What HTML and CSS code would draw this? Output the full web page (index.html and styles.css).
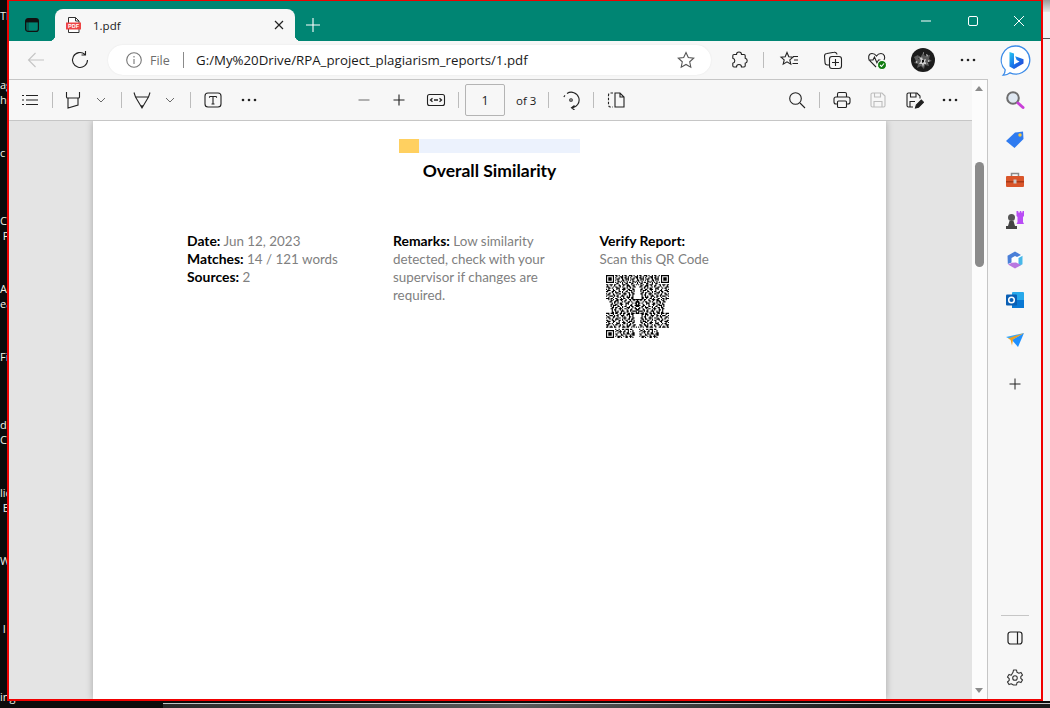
FILE: index.html
```html
<!DOCTYPE html>
<html lang="en">

<head>
  <meta charset="UTF-8">
  <title>1.pdf</title>
  <link rel="stylesheet" href="styles.css">
</head>

<body>
  <!-- Desktop behind the window, only slivers are visible -->
  <div class="desk-left">
    <div class="desk-top">Th</div>
    <div class="desk-item">ag<br>he</div>
    <div class="desk-item">c</div>
    <div class="desk-item">Co<br>&nbsp;P</div>
    <div class="desk-item">A<br>ea</div>
    <div class="desk-item">Fi</div>
    <div class="desk-item">d<br>C</div>
    <div class="desk-item">lic<br>&nbsp;E</div>
    <div class="desk-item">W</div>
    <div class="desk-item">&nbsp;I</div>
    <div class="desk-item">ing</div>
  </div>
  <div class="desk-right"><div class="desk-right-top"></div><div class="desk-right-line"></div></div>
  <div class="desk-bottom"></div>

  <div class="window">
    <!-- Title bar -->
    <div class="titlebar">
      <svg class="tab-toggle" viewBox="0 0 14 14"><rect x=".6" y=".6" width="12.8" height="12.8" rx="2.5" fill="none" stroke="#111" stroke-width="1.2"/><rect x="1" y="1" width="12" height="3.4" fill="#111"/><rect x="1" y="1" width="3" height="12" fill="#111" opacity=".25"/></svg>
      <div class="tab">
        <svg class="favicon" viewBox="0 0 15 16"><path d="M2.5.5h7l3.5 3.5v11.500h-10.500z" fill="#fff" stroke="#333"/><path d="M9.500.5v3.500h3.500" fill="none" stroke="#333"/><rect x="0" y="5.500" width="15" height="7" fill="#ee4444"/><text x="7.500" y="11" class="favicon-text">PDF</text></svg>
        <span class="tab-title">1.pdf</span>
        <svg class="tab-close" viewBox="0 0 10 10"><path d="M1 1l8 8M9 1l-8 8"/></svg>
      </div>
      <svg class="new-tab" viewBox="0 0 14 14"><path d="M7 0v14M0 7h14"/></svg>
      <div class="win-controls">
        <div class="win-btn"><svg viewBox="0 0 10 10"><path d="M0 5h10"/></svg></div>
        <div class="win-btn win-max"><svg viewBox="0 0 10 10"><rect x=".5" y=".5" width="9" height="9" rx="1.500"/></svg></div>
        <div class="win-btn win-close"><svg viewBox="0 0 10 10"><path d="M0 0l10 10M10 0l-10 10"/></svg></div>
      </div>
    </div>

    <!-- Address bar -->
    <div class="navbar">
      <svg class="ic back" viewBox="0 0 20 20"><path d="M18 10H2.500M9.500 3l-7 7 7 7"/></svg>
      <svg class="ic ml-24" viewBox="0 0 20 20"><path d="M17.500 10a7.500 7.500 0 1 1-2.500-5.600M15.500 1v4h-4"/></svg>
      <div class="address">
        <svg class="ic-info" viewBox="0 0 16 16"><circle cx="8" cy="8" r="7.300"/><path d="M8 7v5M8 4v1.500"/></svg>
        <span class="file-label">File</span>
        <span class="addr-sep"></span>
        <span class="url">G:/My%20Drive/RPA_project_plagiarism_reports/1.pdf</span>
        <svg class="ic star" viewBox="0 0 20 20"><path d="M10 2.500l2.300 5 5.400.6-4 3.700 1.100 5.400-4.800-2.700-4.800 2.700 1.100-5.400-4-3.700 5.400-.6z"/></svg>
      </div>
      <svg class="ic ml-18" viewBox="0 0 20 20"><path d="M7.500 4.500a2.500 2.500 0 0 1 5 0h2.500a1.200 1.200 0 0 1 1.200 1.200v2.600a2.500 2.500 0 0 1 0 4.900v2.600a1.200 1.200 0 0 1-1.200 1.200h-2.500a2.500 2.500 0 0 0-5 0H5a1.200 1.200 0 0 1-1.200-1.200v-2.600a2.500 2.500 0 0 0 0-4.900V5.700A1.200 1.200 0 0 1 5 4.500z"/></svg>
      <span class="sep ml-14"></span>
      <svg class="ic ml-15" viewBox="0 0 20 20"><path d="M8 2.500l1.800 4.200 4.200.4-3.200 2.800 1 4.300-3.800-2.300-3.800 2.300 1-4.300-3.200-2.800 4.200-.4zM14 6.500h5M15 10h4M13.500 13.500h5.500"/></svg>
      <svg class="ic ml-24" viewBox="0 0 20 20"><path d="M6 15H4.500A2.500 2.500 0 0 1 2 12.500L1.500 6A2.500 2.500 0 0 1 4 3.500l7-1.200a2.500 2.500 0 0 1 3 2.200"/><rect x="6.500" y="6.500" width="12" height="12" rx="2.500"/><path d="M12.500 9v7M9 12.500h7"/></svg>
      <svg class="ic ml-24" viewBox="0 0 20 20"><path d="M9 17L3 11C.5 8 1.500 3.500 5 3.500c2 0 3.500 1 4.500 2.500 1-1.500 2.500-2.500 4.500-2.500 3.500 0 4.500 4 3 6.500M1.500 10H6l1.500-3 2.500 6 1.500-3h2"/><circle cx="15" cy="15" r="4.500" fill="#107c10" stroke="#fff"/><path d="M13 15l1.500 1.500 2.500-3" stroke="#fff"/></svg>
      <div class="avatar"><svg viewBox="0 0 24 24"><path d="M3 9l4-2 2 3 3-5 2 3 5-1-1 4 3 2-4 1 1 4-4-1-1 4-3-3-4 2 1-4-4-1 2-2z" fill="#5c5c5c"/><path d="M8 8l2 2 1-1 1 3 3-1-1 3 3 2-4 0-1 3-1-3-3 0 2-3zM15 6l2 1-1 2zM5 13l2 1-2 1zM12 4l1 1-1 1zM17 12l2 1-2 1z" fill="#cfcfcf"/><path d="M11 12l2 0 0 2-2 1zM7 10l1 0 0 1zM15 15l1 1-1 0z" fill="#111"/></svg></div>
      <svg class="ic ml-23" viewBox="0 0 20 20"><circle cx="4" cy="10" r="1.300" class="dot"/><circle cx="10" cy="10" r="1.300" class="dot"/><circle cx="16" cy="10" r="1.300" class="dot"/></svg>
      <svg class="bing" viewBox="0 0 31 31"><defs><linearGradient id="bingfill" x1="0" y1="0" x2="1" y2="1"><stop offset="0" stop-color="#27c8f0"/><stop offset=".55" stop-color="#1a6fe8"/><stop offset="1" stop-color="#2a3fd0"/></linearGradient></defs><path d="M15.700 1a14 14 0 1 1-5.600 26.800c-2 1.600-4.500 2.500-7 2.300 1.500-1.500 2.200-3.500 2-5.500A14 14 0 0 1 15.700 1z" fill="#fff" stroke="#3b8be8" stroke-width="1.300"/><path d="M9.500 7l4.500 1.600v11l5.500-3.200-2.800-1.300-1.600-3.800 8.400 3v4.200l-9.500 5.500-4.500-2.500z" fill="url(#bingfill)"/></svg>
    </div>

    <div class="content">
      <div class="main">
        <div class="viewer">
          <!-- PDF toolbar -->
          <div class="pdfbar">
            <svg class="ic" viewBox="0 0 20 20"><path d="M6 5.500h12M6 10h12M6 14.500h12M2 5.500h2M2 10h2M2 14.500h2"/></svg>
            <span class="sep ml-12"></span>
            <svg class="ic ml-10" viewBox="0 0 20 20"><path d="M3.500 2v5a1 1 0 0 0 1 1h11a1 1 0 0 0 1-1V2M5 8v10l10-3V8"/></svg>
            <svg class="chev ml-13" viewBox="0 0 10 6"><path d="M1 1l4 4 4-4"/></svg>
            <span class="sep ml-15"></span>
            <svg class="ic ml-10" viewBox="0 0 20 20"><path d="M2 2.500l1.500 4.500h13L18 2.500M3.500 7L10 18l6.500-11M10 15v3"/></svg>
            <svg class="chev ml-13" viewBox="0 0 10 6"><path d="M1 1l4 4 4-4"/></svg>
            <span class="sep ml-15"></span>
            <svg class="ic ml-12" viewBox="0 0 20 20"><rect x="2" y="3" width="16" height="14" rx="3"/><path d="M6.500 6.500h7M10 6.500v7.500M8.500 14h3M6.500 6.500v1.200M13.500 6.500v1.200"/></svg>
            <svg class="ic ml-16" viewBox="0 0 20 20"><circle cx="4" cy="10" r="1.300" class="dot"/><circle cx="10" cy="10" r="1.300" class="dot"/><circle cx="16" cy="10" r="1.300" class="dot"/></svg>

            <svg class="ic grey ml-95" viewBox="0 0 20 20"><path d="M4.500 10h11"/></svg>
            <svg class="ic ml-15" viewBox="0 0 20 20"><path d="M4.500 10h11M10 4.500v11"/></svg>
            <svg class="ic ml-17" viewBox="0 0 20 20"><rect x="1.500" y="4.500" width="17" height="11" rx="2"/><path d="M8 10h4M6.500 8.200L4.500 10l2 1.800M13.500 8.200l2 1.800-2 1.800" stroke-width="1.300"/></svg>
            <span class="sep ml-12"></span>
            <div class="page-input ml-6">1</div>
            <span class="page-of ml-11">of 3</span>
            <span class="sep ml-12"></span>
            <svg class="ic ml-12" viewBox="0 0 20 20"><path d="M6 3.500a7.800 7.800 0 1 1 4.500 14.300M13.500 15.500l-3 2.300 3 2.200M2.800 7l1.200-1.600"/><circle cx="10" cy="10" r="1.300"/></svg>
            <span class="sep ml-12"></span>
            <svg class="ic ml-12" viewBox="0 0 20 20"><path d="M7 3H4.500A2 2 0 0 0 2.500 5v10a2 2 0 0 0 2 2H7" stroke-dasharray="2.500 1.500"/><path d="M9 3h5l4 4v10H9zM14 3v4h4"/></svg>

            <svg class="ic ml-161" viewBox="0 0 20 20"><circle cx="8.500" cy="8.500" r="5.800"/><path d="M13 13l5 5"/></svg>
            <span class="sep ml-12"></span>
            <svg class="ic ml-12" viewBox="0 0 20 20"><path d="M5.500 7V4a1.500 1.500 0 0 1 1.500-1.500h6A1.500 1.500 0 0 1 14.500 4v3M5.500 14H4a2 2 0 0 1-2-2V9a2 2 0 0 1 2-2h12a2 2 0 0 1 2 2v3a2 2 0 0 1-2 2h-1.500"/><rect x="5.500" y="11" width="9" height="6.500" rx="1"/></svg>
            <svg class="ic disabled ml-16" viewBox="0 0 20 20"><path d="M3 4.500A1.500 1.500 0 0 1 4.500 3H14l3 3v9.500a1.500 1.500 0 0 1-1.500 1.500h-11A1.500 1.500 0 0 1 3 15.500z"/><path d="M6.500 3v4h6V3M6 17v-5.500h8V17"/></svg>
            <svg class="ic ml-16" viewBox="0 0 20 20"><path d="M9 17H4.500A1.500 1.500 0 0 1 3 15.500v-11A1.500 1.500 0 0 1 4.500 3H13l3 3v2.500"/><path d="M6.500 3v4h5.500V3M6 17v-5.500h5"/><path d="M11.500 18l.8-3 5-5 2.200 2.200-5 5z" fill="#222"/></svg>
            <svg class="ic ml-16" viewBox="0 0 20 20"><circle cx="4" cy="10" r="1.300" class="dot"/><circle cx="10" cy="10" r="1.300" class="dot"/><circle cx="16" cy="10" r="1.300" class="dot"/></svg>
          </div>

          <div class="pages">
            <div class="page">
              <div class="score-bar"><span class="score-fill"></span><span class="score-rest"></span></div>
              <h1 class="report-title">Overall Similarity</h1>
              <div class="report-info">
                <div>
                  <b>Date:</b> Jun 12, 2023<br>
                  <b>Matches:</b> 14 / 121 words<br>
                  <b>Sources:</b> 2
                </div>
                <div>
                  <b>Remarks:</b> Low similarity<br>
                  detected, check with your<br>
                  supervisor if changes are<br>
                  required.
                </div>
                <div>
                  <b>Verify Report:</b><br>
                  Scan this QR Code
                  <svg class="qr" viewBox="0 0 55 55">
                    <defs>
                      <path id="qr-top" d="M8 .5h2m1 0h1m2 0h1m1 0h2m2 0h1M9 1.500h1m2 0h3m2 0h1m1 0h1M8 2.500h1m2 0h1m1 0h2m1 0h2m1 0h1M9 3.500h3m2 0h1m2 0h3M8 4.500h1m1 0h1m3 0h2m1 0h1m1 0h1M10 5.500h2m1 0h1m1 0h1m2 0h1M8 6.500h1m1 0h1m1 0h1m1 0h1m1 0h1m1 0h1m1 0h1M9 7.500h2m3 0h1m2 0h2"/>
                      <path id="qr-band" d="M0 8.500h2m1 0h3m1 0h2m2 0h1m2 0h3m1 0h2m2 0h1m1 0h1m1 0h1M1 9.500h1m2 0h1m2 0h1m3 0h2m2 0h1m2 0h3m2 0h2M0 10.500h3m3 0h1m1 0h2m2 0h1m1 0h1m3 0h1m1 0h2m2 0h2M2 11.500h2m1 0h1m3 0h3m3 0h2m1 0h1m2 0h1m1 0h1M0 12.500h1m1 0h1m3 0h1m2 0h1m1 0h1m2 0h3m2 0h2m2 0h2M1 13.500h3m2 0h2m3 0h1m3 0h1m2 0h1m1 0h3m1 0h1M0 14.500h2m3 0h2m1 0h1m2 0h2m1 0h1m2 0h2m3 0h1m1 0h1M3 15.500h1m1 0h1m2 0h3m3 0h1m1 0h1m2 0h2m1 0h2M0 16.500h1m1 0h2m2 0h1m2 0h1m1 0h2m2 0h3m2 0h1m2 0h2M1 17.500h2m3 0h2m2 0h1m3 0h1m1 0h1m3 0h2m1 0h1M0 18.500h1m2 0h3m1 0h1m1 0h2m2 0h3m2 0h1m1 0h1m2 0h1M2 19.500h1m3 0h1m3 0h1m1 0h1m2 0h1m2 0h3m1 0h2M0 20.500h3m1 0h2m2 0h2m3 0h1m1 0h2m2 0h1m2 0h2"/>
                      <path id="qr-bot" d="M8 21.500h1m2 0h1m2 0h2m1 0h3m1 0h2M9 22.500h2m1 0h1m3 0h1m2 0h1m3 0h1M8 23.500h1m2 0h3m1 0h2m2 0h1m1 0h1m1 0h1M10 24.500h1m1 0h1m2 0h1m2 0h2m3 0h2M8 25.500h2m3 0h1m1 0h2m1 0h3m1 0h3M9 26.500h1m3 0h2m2 0h1m3 0h1m1 0h2M8 27.500h1m1 0h3m2 0h1m1 0h2m1 0h3M10 28.500h2m1 0h1m3 0h2m2 0h1m1 0h1"/>
                    </defs>
                    <path d="M0 0h7v7H0zM1 1v5h5V1zM2 2h3v3H2zM48 0h7v7h-7zM49 1v5h5V1zM50 2h3v3h-3zM0 48h7v7H0zM1 49v5h5v-5zM2 50h3v3H2z" fill-rule="evenodd"/>
                    <g class="qr-data">
                      <use href="#qr-top"/>
                      <use href="#qr-top" transform="translate(13 0)"/>
                      <use href="#qr-top" transform="translate(26 0)"/>
                      <use href="#qr-band"/>
                      <use href="#qr-band" transform="translate(29 13) scale(-1 1)"/>
                      <use href="#qr-band" transform="translate(0 54) scale(1 -1)"/>
                      <use href="#qr-band" transform="translate(55 0) scale(-1 1)"/>
                      <use href="#qr-band" transform="translate(26 13)"/>
                      <use href="#qr-band" transform="translate(55 54) scale(-1 -1)"/>
                      <use href="#qr-bot" transform="translate(0 26)"/>
                      <use href="#qr-bot" transform="translate(21 26)"/>
                    </g>
                  </svg>
                </div>
              </div>
            </div>
          </div>
        </div>
        <div class="scrollbar">
          <span class="arrow-up"></span>
          <span class="thumb"></span>
          <span class="arrow-down"></span>
        </div>
      </div>

      <!-- Edge sidebar -->
      <div class="sidebar">
        <svg class="side-ic" viewBox="0 0 20 20"><circle cx="8" cy="8" r="5.800" fill="#dfe8f2" stroke="#6e6e6e" stroke-width="2"/><path d="M13 13l5 4.500" stroke="#c93fd8" stroke-width="3" stroke-linecap="round"/></svg>
        <svg class="side-ic" viewBox="0 0 20 20"><path d="M1 11L10 2.500 18 1.500 18.500 9 9.500 18z" fill="#2f7bf0"/><circle cx="15" cy="5" r="1.700" fill="#f7c840"/></svg>
        <svg class="side-ic" viewBox="0 0 20 20"><path d="M6.500 6V3.500h7V6" fill="none" stroke="#8a8a8a" stroke-width="1.500"/><rect x="1" y="6" width="18" height="11" rx="1" fill="#d9552a"/><rect x="1" y="11" width="18" height="1.500" fill="#a83a18"/><rect x="8.500" y="9.500" width="3" height="4" fill="#c9c9c9"/></svg>
        <svg class="side-ic" viewBox="0 0 20 20"><path d="M11.500 1h1.800v1.500h1.500V1h1.500v1.500H17.500V1H19v5l-1 1v5l1 2h-7.500l1-2V7l-1-1z" fill="#b94cf5"/><circle cx="6.500" cy="7.500" r="3.500" fill="#555"/><path d="M4.500 11h4l1.500 5H3zM1 16h11v3H1z" fill="#444"/></svg>
        <svg class="side-ic" viewBox="0 0 20 20"><path d="M10 1.500l7.500 4.200v8.600L10 18.500l-7.500-4.200V5.700z" fill="#fff"/><path d="M10 1.500l6 3.400-4 2.100L10 6l-3.500 2v4.500L2.800 14 2.500 5.700z" fill="#4a7fd8"/><path d="M17.500 5.700v8.600l-4 2.300V8z" fill="#48b8e8"/><path d="M3 14.500L10 18.500l6-3.500-5-2.500-4 .3z" fill="#b878e0"/></svg>
        <svg class="side-ic" viewBox="0 0 20 20"><rect x="7" y="2" width="12" height="16" rx="1" fill="#28a8ea"/><rect x="7" y="10" width="12" height="8" fill="#0a78d4"/><rect x="1" y="4.500" width="11" height="11" rx="1" fill="#0a5fb4"/><circle cx="6.500" cy="10" r="2.800" fill="none" stroke="#fff" stroke-width="1.500"/></svg>
        <svg class="side-ic" viewBox="0 0 20 20"><path d="M1 7l18-4-12 7z" fill="#3fa9f5"/><path d="M7 10L19 3l-6 14z" fill="#1e90ff"/><path d="M3 8.500L19 3 8 9.500 7 15.500 5.500 9.700z" fill="#f0a020"/></svg>
        <svg class="side-ic side-plus" viewBox="0 0 20 20"><path d="M10 4.500v11M4.500 10h11" fill="none" stroke="#222"/></svg>
        <span class="side-line"></span>
        <svg class="side-ic side-panel" viewBox="0 0 20 20"><rect x="3" y="4" width="14" height="12" rx="2.500" fill="none" stroke="#222" stroke-width="1.200"/><path d="M12.500 4v12" stroke="#222" stroke-width="1.200"/></svg>
        <svg class="side-ic side-gear" viewBox="0 0 20 20"><path d="M8.500 2h3l.5 2.300 1.800.9 2.200-.8 1.500 2.600-1.700 1.600v1.800l1.700 1.600-1.500 2.600-2.200-.8-1.800.9-.5 2.300h-3L8 16.700l-1.800-.9-2.200.8-1.500-2.600 1.700-1.600V10.600L2.500 9l1.500-2.600 2.200.8L8 4.300z" fill="none" stroke="#333" stroke-width="1.100" stroke-linejoin="round"/><circle cx="10" cy="10" r="2.300" fill="none" stroke="#333" stroke-width="1.100"/></svg>
      </div>
    </div>
  </div>
</body>

</html>
```
FILE: styles.css
```css
body {
  margin: 0;
  width: 1050px;
  height: 708px;
  position: relative;
  overflow: hidden;
  background: #0b0b0b;
  font-family: "Open Sans", sans-serif;
  color: #1a1a1a;
}

svg {
  display: block;
  flex-shrink: 0;
}

/* Desktop slivers, the window covers the rest of these labels */
.desk-left {
  position: absolute;
  left: 0;
  top: 0;
  color: #f2f2e8;
  font-size: 11px;
  line-height: 15px;
  white-space: nowrap;
}

.desk-top {
  height: 69px;
  padding-top: 8px;
}

.desk-item {
  height: 68px;
}

.desk-item:last-child {
  height: 15px;
}

.desk-right {
  position: absolute;
  left: 1043px;
  top: 0;
  width: 7px;
  height: 701px;
  background: #f3f3f3;
}

.desk-right-top {
  height: 12px;
  background: linear-gradient(#9a9a9a, #e6e6e6);
}

.desk-right-line {
  margin-top: 26px;
  height: 1px;
  background: #555;
}

.desk-bottom {
  position: absolute;
  left: 163px;
  right: 0;
  top: 703px;
  height: 4px;
  background: linear-gradient(90deg, #2a2a2a, #5a5a5a 40%, #1c1c1c 80%);
  border-top: 1px solid #c4c4c4;
}

/* Window */
.window {
  position: absolute;
  left: 7px;
  top: 0;
  width: 1032px;
  height: 698px;
  border: 2px solid #f00000;
  border-top-width: 1px;
  display: flex;
  flex-direction: column;
  background: #f7f7f7;
}

.titlebar {
  height: 32px;
  padding: 8px 0 0 16px;
  background: #008573;
  display: flex;
  align-items: center;
}

.tab-toggle {
  width: 14px;
  height: 14px;
}

.tab {
  position: relative;
  margin-left: 16px;
  width: 240px;
  height: 32px;
  background: #f7f7f7;
  border-radius: 8px 8px 0 0;
  display: flex;
  align-items: center;
  box-sizing: border-box;
  padding-left: 11px;
}

.tab::before,
.tab::after {
  content: "";
  position: absolute;
  bottom: 0;
  width: 6px;
  height: 6px;
}

.tab::before {
  left: -6px;
  background: radial-gradient(circle at 0 0, transparent 6px, #f7f7f7 6.500px);
}

.tab::after {
  right: -6px;
  background: radial-gradient(circle at 100% 0, transparent 6px, #f7f7f7 6.500px);
}

.favicon {
  width: 15px;
  height: 16px;
}

.favicon-text {
  font: bold 5.500px "Liberation Sans", sans-serif;
  fill: #fff;
  text-anchor: middle;
}

.tab-title {
  margin-left: 12px;
  font-size: 11.500px;
}

.tab-close {
  margin-left: auto;
  margin-right: 11px;
  width: 10px;
  height: 10px;
  fill: none;
  stroke: #222;
  stroke-width: 1.200;
}

.new-tab {
  margin-left: 11px;
  width: 14px;
  height: 14px;
  fill: none;
  stroke: #fff;
  stroke-width: 1.100;
}

.win-controls {
  margin-left: auto;
  margin-top: -8px;
  display: flex;
  height: 40px;
}

.win-btn {
  width: 46px;
  display: flex;
  align-items: center;
  justify-content: center;
}

.win-btn svg {
  width: 10px;
  height: 10px;
  fill: none;
  stroke: #fff;
  stroke-width: 1;
}

.win-max {
  width: 48px;
}

.win-close {
  width: 44px;
}

/* Address bar */
.navbar {
  height: 38px;
  padding-left: 17px;
  display: flex;
  align-items: center;
  background: #f7f7f7;
}

.ic {
  width: 20px;
  height: 20px;
  fill: none;
  stroke: #222;
  stroke-width: 1.100;
}

.ic .dot {
  fill: #222;
  stroke: none;
}

.back {
  stroke: #c4c4c4;
}

.grey {
  stroke: #777;
}

.disabled {
  stroke: #bdbdbd;
}

.address {
  margin-left: 18px;
  width: 603px;
  height: 30px;
  box-sizing: border-box;
  padding: 0 15px 0 18px;
  background: #fff;
  border-radius: 15px;
  display: flex;
  align-items: center;
  box-shadow: 0 0 2px rgba(0, 0, 0, .08);
}

.ic-info {
  width: 16px;
  height: 16px;
  fill: none;
  stroke: #777;
  stroke-width: 1.100;
}

.file-label {
  margin-left: 8px;
  width: 21px;
  font-size: 12.500px;
  color: #6d6d6d;
}

.addr-sep {
  margin-left: 12px;
  width: 1px;
  height: 16px;
  background: #8a8a8a;
}

.url {
  margin-left: 12px;
  font-size: 13.280px;
  white-space: nowrap;
}

.star {
  margin-left: auto;
  stroke: #555;
}

.sep {
  width: 1px;
  height: 16px;
  background: #bcbcbc;
  flex-shrink: 0;
}

.avatar {
  margin-left: 24px;
  width: 24px;
  height: 24px;
  border-radius: 50%;
  background: #1c1c1c;
  overflow: hidden;
}

.bing {
  margin-left: 22px;
  width: 31px;
  height: 31px;
}

.ml-6 { margin-left: 6px; }
.ml-10 { margin-left: 10px; }
.ml-11 { margin-left: 11px; }
.ml-12 { margin-left: 12px; }
.ml-13 { margin-left: 13px; }
.ml-14 { margin-left: 14px; }
.ml-15 { margin-left: 15px; }
.ml-16 { margin-left: 16px; }
.ml-17 { margin-left: 17px; }
.ml-18 { margin-left: 18px; }
.ml-23 { margin-left: 23px; }
.ml-24 { margin-left: 24px; }
.ml-95 { margin-left: 95px; }
.ml-161 { margin-left: 161px; }

/* Content */
.content {
  flex: 1;
  min-height: 0;
  display: flex;
}

.main {
  width: 978px;
  border-top: 1px solid #c6c6c6;
  border-right: 1px solid #c6c6c6;
  display: flex;
}

.viewer {
  width: 963px;
  display: flex;
  flex-direction: column;
}

.pdfbar {
  height: 40px;
  padding-left: 11px;
  background: #f7f7f7;
  border-bottom: 1px solid #c6c6c6;
  display: flex;
  align-items: center;
}

.chev {
  width: 10px;
  height: 6px;
  fill: none;
  stroke: #6a6a6a;
  stroke-width: 1;
}

.page-input {
  width: 40px;
  height: 32px;
  box-sizing: border-box;
  border: 1px solid #b4b4b4;
  border-radius: 2px;
  display: flex;
  align-items: center;
  justify-content: center;
  font-size: 12.500px;
  flex-shrink: 0;
}

.page-of {
  width: 20px;
  font-size: 11.500px;
  white-space: nowrap;
  flex-shrink: 0;
}

.pages {
  flex: 1;
  min-height: 0;
  background: #e4e4e4;
  overflow: hidden;
  padding-left: 84px;
}

.page {
  width: 793px;
  height: 100%;
  box-sizing: border-box;
  padding-top: 18px;
  background: #fff;
  box-shadow: 0 0 7px rgba(0, 0, 0, .28);
  font-family: Lato, sans-serif;
  color: #808080;
}

.score-bar {
  margin-left: 306px;
  display: flex;
  height: 14px;
}

.score-fill {
  width: 20px;
  background: #ffd060;
}

.score-rest {
  width: 161px;
  background: #ecf2fd;
}

.report-title {
  margin: 6px 0 0;
  text-align: center;
  font-size: 17.500px;
  line-height: 24px;
  font-weight: 700;
  color: #000;
}

.report-info {
  margin-top: 49px;
  padding-left: 94px;
  display: grid;
  grid-template-columns: 206px 206.500px 1fr;
  font-size: 13.400px;
  line-height: 18px;
}

.report-info b {
  color: #000;
  font-size: 13.900px;
}

.qr {
  margin: 7px 0 0 6px;
  width: 63px;
  height: 63px;
  fill: #000;
}

.qr-data {
  fill: none;
  stroke: #000;
  stroke-width: 1;
}

/* Scrollbar */
.scrollbar {
  width: 15px;
  position: relative;
  background: #fcfcfc;
}

.thumb {
  position: absolute;
  left: 3px;
  top: 82px;
  width: 9px;
  height: 105px;
  border-radius: 5px;
  background: #8b8b8b;
}

.arrow-up,
.arrow-down {
  position: absolute;
  left: 3px;
  border-left: 4.500px solid transparent;
  border-right: 4.500px solid transparent;
}

.arrow-up {
  top: 6px;
  border-bottom: 5px solid #8b8b8b;
}

.arrow-down {
  bottom: 6px;
  border-top: 5px solid #8b8b8b;
}

/* Sidebar */
.sidebar {
  flex: 1;
  box-sizing: border-box;
  padding: 11px 0 11px;
  display: flex;
  flex-direction: column;
  align-items: center;
}

.side-ic {
  width: 20px;
  height: 20px;
  margin-bottom: 20px;
}

.side-plus {
  margin-top: 4px;
}

.side-line {
  margin-top: auto;
  margin-bottom: 12px;
  width: 28px;
  height: 1px;
  background: #c6c6c6;
}

.side-gear {
  margin-bottom: 0;
}
```
